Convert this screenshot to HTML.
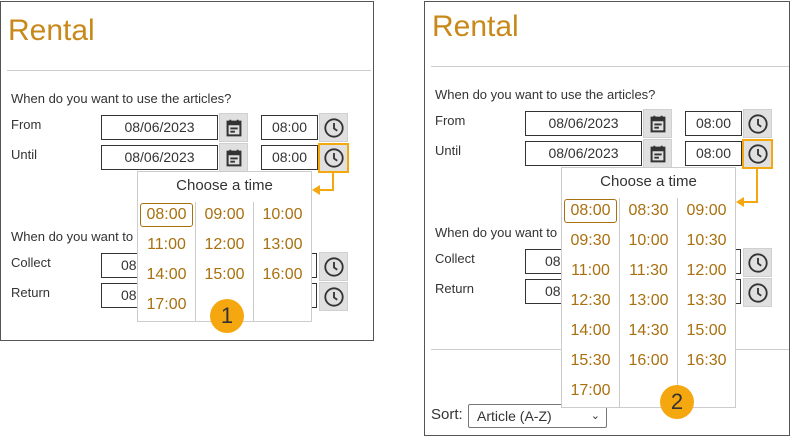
<!DOCTYPE html>
<html><head><meta charset="utf-8"><style>
*{margin:0;padding:0;box-sizing:border-box}
body{width:790px;height:436px;background:#fff;position:relative;overflow:hidden;font-family:"Liberation Sans",sans-serif;color:#333}
.p{position:absolute;border:1px solid #555;overflow:hidden}
.c{position:absolute;left:0;top:0;width:400px;height:440px}
.a{position:absolute}
.t{position:absolute;font-size:13px;line-height:16px;white-space:nowrap}
.r{position:absolute;font-size:30px;color:#c8891a;line-height:34px}
.hr{position:absolute;height:1px;background:#ccc}
.in{position:absolute;border:1px solid #333;background:#fff;font-size:14px;text-align:center;line-height:23px;height:25px;overflow:hidden}
.bt{position:absolute;width:29px;height:29px;background:#e0e0e0;border:1px solid #d0d0d0;display:flex;align-items:center;justify-content:center}
.pop{position:absolute;background:#fff;border:1px solid #ccc;width:175px}
.pop .h{position:absolute;left:0;width:100%;text-align:center;font-size:15px;top:5px;color:#333}
.col{position:absolute;width:1px;background:#ccc}
.it{position:absolute;width:53px;text-align:center;font-size:16px;color:#a8700f;line-height:24px;height:24px}
.sel{border:1px solid #a8700f;border-radius:3px;line-height:22px}
.badge{position:absolute;width:34px;height:34px;border-radius:50%;background:#f5a70f;color:#333;font-size:22px;text-align:center;line-height:34px}
.hl{position:absolute;border:2px solid #f5a70f}
</style></head><body>
<svg width="0" height="0" style="position:absolute"><defs>
<symbol id="clk" viewBox="0 0 24 24"><circle cx="12" cy="12" r="9.5" fill="none" stroke="#333" stroke-width="2"/><path d="M12 6.5V12.5L15.5 15" fill="none" stroke="#333" stroke-width="2"/></symbol>
<symbol id="cal" viewBox="0 0 24 24"><path d="M5 5h14v15H5z" fill="none" stroke="#333" stroke-width="2.2"/><path d="M5 5h14v4H5z" fill="#333"/><path d="M8 3v3M16 3v3" stroke="#333" stroke-width="2"/><path d="M8 12.5h8M8 16h5" stroke="#333" stroke-width="2"/></symbol>
</defs></svg>

<!-- LEFT PANEL -->
<div class="p" style="left:0;top:1px;width:374px;height:340px">
<div class="c" style="left:-1px;top:-2px">
<div class="r" style="left:8px;top:14px">Rental</div>
<div class="hr" style="left:7px;top:70px;width:364px"></div>
<div class="t" style="left:11px;top:91px">When do you want to use the articles?</div>
<div class="t" style="left:11px;top:117px">From</div>
<div class="t" style="left:11px;top:147px">Until</div>
<div class="in" style="left:101px;top:115px;width:117px">08/06/2023</div>
<div class="bt" style="left:219px;top:113px"><svg width="22" height="22"><use href="#cal"/></svg></div>
<div class="in" style="left:261px;top:115px;width:57px">08:00</div>
<div class="bt" style="left:319px;top:113px"><svg width="22" height="22"><use href="#clk"/></svg></div>
<div class="in" style="left:101px;top:145px;width:117px">08/06/2023</div>
<div class="bt" style="left:219px;top:143px"><svg width="22" height="22"><use href="#cal"/></svg></div>
<div class="in" style="left:261px;top:145px;width:57px">08:00</div>
<div class="bt" style="left:319px;top:143px"><svg width="22" height="22"><use href="#clk"/></svg></div>
<div class="hl" style="left:318px;top:143px;width:31px;height:30px"></div>
<div class="t" style="left:11px;top:229px">When do you want to</div>
<div class="t" style="left:11px;top:255px">Collect</div>
<div class="t" style="left:11px;top:285px">Return</div>
<div class="in" style="left:101px;top:253px;width:216px;text-align:left;padding-left:19px">08</div>
<div class="in" style="left:101px;top:283px;width:216px;text-align:left;padding-left:19px">08</div>
<div class="bt" style="left:319px;top:252px"><svg width="22" height="22"><use href="#clk"/></svg></div>
<div class="bt" style="left:319px;top:282px"><svg width="22" height="22"><use href="#clk"/></svg></div>
<div class="pop" style="left:137px;top:171px;height:151px">
<div class="h">Choose a time</div>
<div class="col" style="left:57px;top:30px;height:120px"></div>
<div class="col" style="left:115px;top:30px;height:120px"></div>
<div class="it sel" style="left:2px;top:31px">08:00</div><div class="it" style="left:60px;top:31px">09:00</div><div class="it" style="left:118px;top:31px">10:00</div>
<div class="it" style="left:2px;top:61px">11:00</div><div class="it" style="left:60px;top:61px">12:00</div><div class="it" style="left:118px;top:61px">13:00</div>
<div class="it" style="left:2px;top:91px">14:00</div><div class="it" style="left:60px;top:91px">15:00</div><div class="it" style="left:118px;top:91px">16:00</div>
<div class="it" style="left:2px;top:121px">17:00</div>
</div>
<svg class="a" style="left:300px;top:170px" width="40" height="30"><path d="M33 2V20H18" fill="none" stroke="#f5a70f" stroke-width="2"/><path d="M12 20L20 15V25Z" fill="#f5a70f"/></svg>
<div class="badge" style="left:210px;top:299px">1</div>
</div></div>

<!-- RIGHT PANEL -->
<div class="p" style="left:424px;top:1px;width:366px;height:435px">
<div class="c" style="left:-425px;top:-6px;width:800px">
<div class="r" style="left:432px;top:14px">Rental</div>
<div class="hr" style="left:431px;top:70px;width:364px"></div>
<div class="t" style="left:435px;top:91px">When do you want to use the articles?</div>
<div class="t" style="left:435px;top:117px">From</div>
<div class="t" style="left:435px;top:147px">Until</div>
<div class="in" style="left:525px;top:115px;width:117px">08/06/2023</div>
<div class="bt" style="left:643px;top:113px"><svg width="22" height="22"><use href="#cal"/></svg></div>
<div class="in" style="left:685px;top:115px;width:57px">08:00</div>
<div class="bt" style="left:743px;top:113px"><svg width="22" height="22"><use href="#clk"/></svg></div>
<div class="in" style="left:525px;top:145px;width:117px">08/06/2023</div>
<div class="bt" style="left:643px;top:143px"><svg width="22" height="22"><use href="#cal"/></svg></div>
<div class="in" style="left:685px;top:145px;width:57px">08:00</div>
<div class="bt" style="left:743px;top:143px"><svg width="22" height="22"><use href="#clk"/></svg></div>
<div class="hl" style="left:742px;top:143px;width:31px;height:30px"></div>
<div class="t" style="left:435px;top:229px">When do you want to</div>
<div class="t" style="left:435px;top:255px">Collect</div>
<div class="t" style="left:435px;top:285px">Return</div>
<div class="in" style="left:525px;top:253px;width:216px;text-align:left;padding-left:19px">08</div>
<div class="in" style="left:525px;top:283px;width:216px;text-align:left;padding-left:19px">08</div>
<div class="bt" style="left:743px;top:252px"><svg width="22" height="22"><use href="#clk"/></svg></div>
<div class="bt" style="left:743px;top:282px"><svg width="22" height="22"><use href="#clk"/></svg></div>
<div class="hr" style="left:431px;top:353px;width:364px"></div>
<div class="t" style="left:431px;top:410px;font-size:15px;line-height:18px">Sort:</div>
<div class="a" style="left:468px;top:408px;width:139px;height:24px;border:1px solid #777;border-radius:2px;font-size:14px;line-height:22px;padding-left:8px;background:#fff">Article (A-Z)<span style="position:absolute;right:6px;top:0;font-size:11px">&#8964;</span></div>
<div class="pop" style="left:561px;top:171px;height:241px">
<div class="h">Choose a time</div>
<div class="col" style="left:57px;top:30px;height:210px"></div>
<div class="col" style="left:115px;top:30px;height:210px"></div>
<div class="it sel" style="left:2px;top:31px">08:00</div><div class="it" style="left:60px;top:31px">08:30</div><div class="it" style="left:118px;top:31px">09:00</div>
<div class="it" style="left:2px;top:61px">09:30</div><div class="it" style="left:60px;top:61px">10:00</div><div class="it" style="left:118px;top:61px">10:30</div>
<div class="it" style="left:2px;top:91px">11:00</div><div class="it" style="left:60px;top:91px">11:30</div><div class="it" style="left:118px;top:91px">12:00</div>
<div class="it" style="left:2px;top:121px">12:30</div><div class="it" style="left:60px;top:121px">13:00</div><div class="it" style="left:118px;top:121px">13:30</div>
<div class="it" style="left:2px;top:151px">14:00</div><div class="it" style="left:60px;top:151px">14:30</div><div class="it" style="left:118px;top:151px">15:00</div>
<div class="it" style="left:2px;top:181px">15:30</div><div class="it" style="left:60px;top:181px">16:00</div><div class="it" style="left:118px;top:181px">16:30</div>
<div class="it" style="left:2px;top:211px">17:00</div>
</div>
<svg class="a" style="left:724px;top:170px" width="40" height="46"><path d="M33 2V36H18" fill="none" stroke="#f5a70f" stroke-width="2"/><path d="M12 36L20 31V41Z" fill="#f5a70f"/></svg>
<div class="badge" style="left:660px;top:389px">2</div>
</div></div>
</body></html>
